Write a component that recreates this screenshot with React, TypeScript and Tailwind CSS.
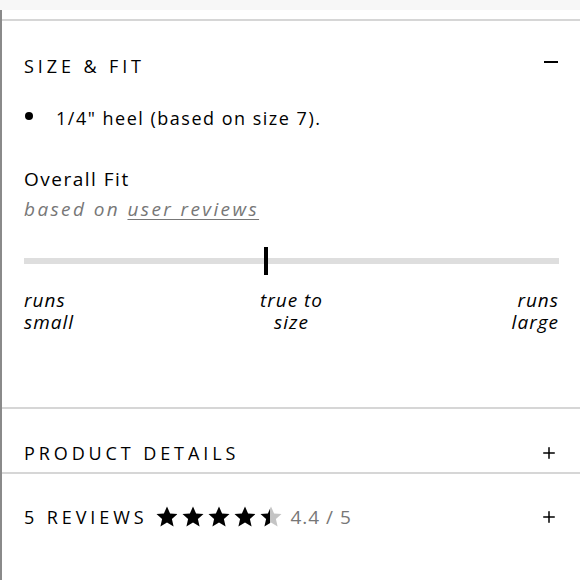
import { Plus } from "lucide-react";

const STAR =
  "M12 1.5l3.1 6.9 7.4.7-5.6 5 1.7 7.4L12 17.6l-6.6 3.9 1.7-7.4-5.6-5 7.4-.7z";

const Star = ({ fill }: { fill: number }) => (
  <svg width="24" height="24" viewBox="0 0 24 24">
    <defs>
      <linearGradient id={`g${fill}`} x1="0" x2="1" y1="0" y2="0">
        <stop offset={fill} stopColor="#000" />
        <stop offset={fill} stopColor="#c4c4c4" />
      </linearGradient>
    </defs>
    <path d={STAR} fill={`url(#g${fill})`} />
  </svg>
);

const SectionHeader = ({
  title,
  open,
  children,
}: {
  title: string;
  open?: boolean;
  children?: React.ReactNode;
}) => (
  <div className="flex items-center justify-between h-[24px]">
    <div className="flex items-center">
      <span className="text-[18px] tracking-[3.9px] text-black">{title}</span>
      {children}
    </div>
    {open ? (
      <span className="w-[14px] h-[2px] bg-black mr-[22px] -mt-[8px]" />
    ) : (
      <Plus className="w-[18px] h-[18px] mr-[22px]" strokeWidth={2} />
    )}
  </div>
);

export default function App() {
  return (
    <div
      className="w-[580px] h-[580px] bg-white overflow-hidden text-black"
      style={{ fontFamily: "'Open Sans', 'Noto Sans', sans-serif" }}
    >
      <div className="h-[10px] bg-[#f7f7f7]" />
      <div className="border-l-2 border-[#8a8a8a] h-[570px]">
        <div className="h-[9px]" />

        {/* size & fit */}
        <div className="border-t-2 border-[#d6d6d6] pl-[22px] pt-[33px] pb-[74px]">
          <SectionHeader title="SIZE & FIT" open />
          <div className="flex items-center mt-[28px] h-[24px] text-[18px] tracking-[1.5px]">
            <span className="w-[8px] h-[8px] rounded-full bg-black ml-[1px] mr-[23px] -mt-[4px]" />
            <span>1/4" heel (based on size 7).</span>
          </div>
          <div className="mt-[36px] text-[19px] leading-[26px] tracking-[1.5px]">Overall Fit</div>
          <div className="mt-[5px] text-[19px] leading-[24px] italic text-[#777] tracking-[2.4px]">
            based on <span className="underline underline-offset-[3px]">user reviews</span>
          </div>
          <div className="relative mt-[26px] h-[28px] mr-[21px]">
            <div className="absolute left-0 right-0 top-[11px] h-[6px] bg-[#dedede]" />
            <div className="absolute left-[240px] top-0 w-[4px] h-[28px] bg-black" />
          </div>
          <div className="mt-[14px] mr-[21px] flex justify-between text-[19px] leading-[22px] italic tracking-[1px]">
            <div className="w-[80px]">
              runs
              <br />
              small
            </div>
            <div className="text-center">
              true to
              <br />
              size
            </div>
            <div className="w-[80px] text-right">
              runs
              <br />
              large
            </div>
          </div>
        </div>

        {/* product details */}
        <div className="border-t-2 border-[#d6d6d6] pl-[22px] pt-[32px] pb-[7px]">
          <SectionHeader title="PRODUCT DETAILS" />
        </div>

        {/* reviews */}
        <div className="border-t-2 border-[#d6d6d6] pl-[22px] pt-[31px]">
          <SectionHeader title="5 REVIEWS">
            <div className="flex items-center ml-[8px] gap-[2px]">
              <Star fill={1} />
              <Star fill={1} />
              <Star fill={1} />
              <Star fill={1} />
              <Star fill={0.45} />
            </div>
            <span className="ml-[7px] text-[19px] text-[#777] tracking-[1px]">4.4 / 5</span>
          </SectionHeader>
        </div>
      </div>
    </div>
  );
}
